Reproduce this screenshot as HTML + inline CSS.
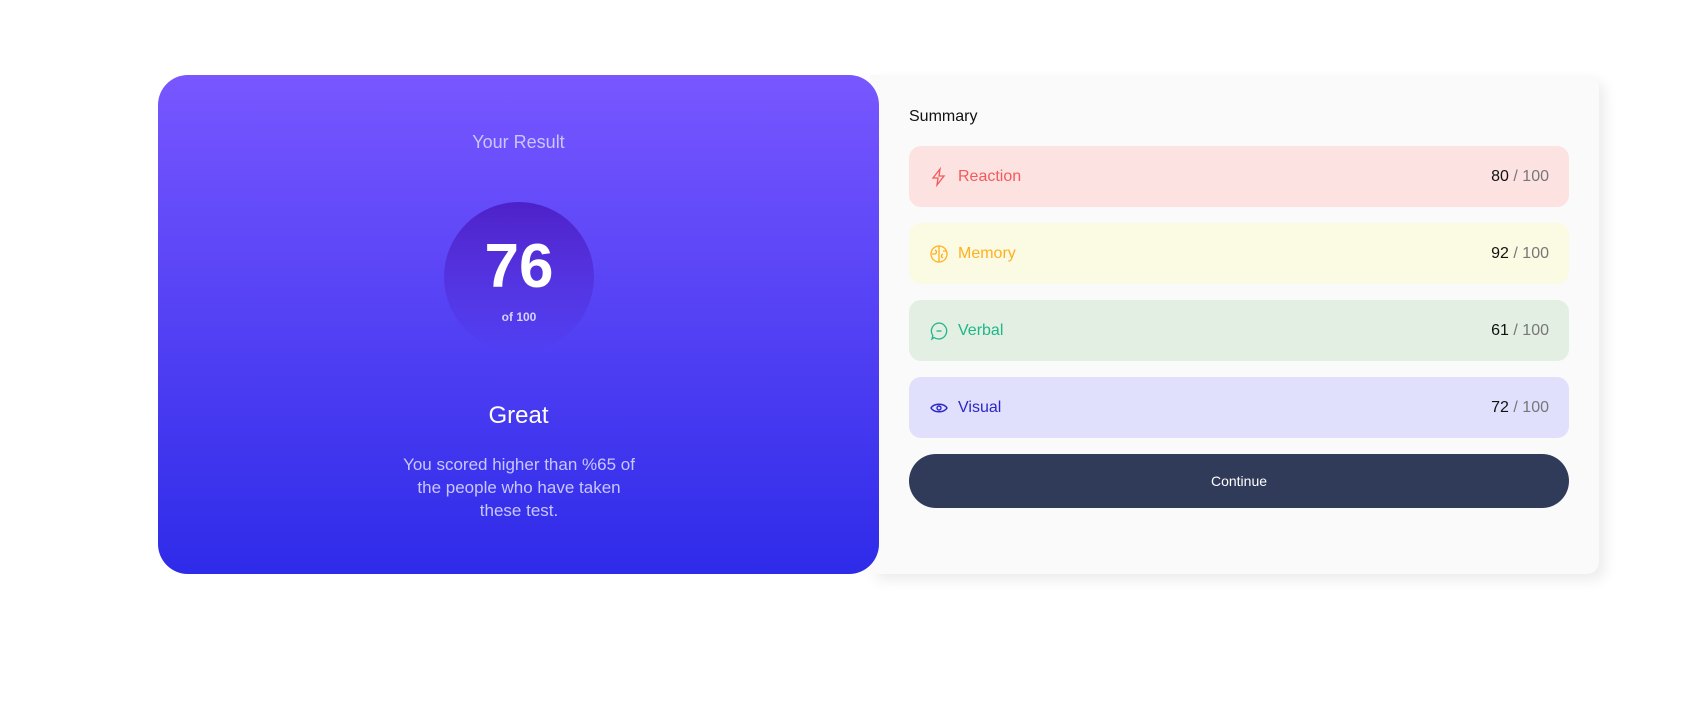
<!DOCTYPE html>
<html><head><style>
*{margin:0;padding:0;box-sizing:border-box}
body{width:1702px;height:706px;background:#fff;font-family:"Liberation Sans",sans-serif;position:relative;overflow:hidden}
.left{position:absolute;left:158px;top:75px;width:721px;height:499px;border-radius:30px;background:linear-gradient(180deg,#7857ff 0%,#2e2be9 100%);color:#fff;text-align:center;z-index:2}
.right{position:absolute;left:870px;top:75px;width:729px;height:499px;border-radius:0 12px 12px 0;background:#fafafa;box-shadow:6px 6px 14px rgba(0,0,0,0.08)}
.yr{position:absolute;top:57px;left:0;width:100%;font-size:18px;color:#c8c7ff}
.circ{position:absolute;left:286px;top:127px;width:150px;height:150px;border-radius:50%;background:linear-gradient(180deg,#4d21c9 0%,rgba(37,33,201,0) 100%)}
.num{position:absolute;top:30px;width:100%;font-size:62px;font-weight:bold;line-height:70px}
.of{position:absolute;top:108px;width:100%;font-size:12px;font-weight:bold;color:#d5d3ff}
.great{position:absolute;top:327px;width:100%;font-size:24px;}
.p{position:absolute;top:378px;left:243px;width:236px;font-size:17px;line-height:23px;color:#c8c7ff}
.sum{position:absolute;left:39px;top:33px;font-size:16px;color:#111}
.row{position:absolute;left:39px;width:660px;height:61px;border-radius:12px;display:flex;align-items:center;padding:0 20px;font-size:16px}
.row svg{width:20px;height:20px;margin-right:9px}
.row .s{margin-left:auto;color:#111}
.row .s span{color:#777}
.btn{position:absolute;left:39px;top:379px;width:660px;height:54px;border-radius:27px;background:#303b5a;color:#fff;font-size:14px;text-align:center;line-height:54px}
</style></head><body>
<div class="left">
<div class="yr">Your Result</div>
<div class="circ"><div class="num">76</div><div class="of">of 100</div></div>
<div class="great">Great</div>
<div class="p">You scored higher than %65 of the people who have taken these test.</div>
</div>
<div class="right">
<div class="sum">Summary</div>
<div class="row" style="top:71px;background:#fde2e2;color:#f55a5a"><svg viewBox="0 0 20 20" fill="none" stroke="#f55a5a" stroke-width="1.3"><path d="M11 2L4 11h5l-1 7 7-9h-5z"/></svg>Reaction<div class="s">80 <span>/ 100</span></div></div>
<div class="row" style="top:148px;background:#fbfae3;color:#ffb01f"><svg viewBox="0 0 20 20" fill="none" stroke="#ffb01f" stroke-width="1.3"><circle cx="10" cy="10" r="8"/><path d="M10 2v16M6 6c2 1 2 3 0 4M14 10c-2 1-2 3 0 4M3 10h3M14 7h3"/></svg>Memory<div class="s">92 <span>/ 100</span></div></div>
<div class="row" style="top:225px;background:#e2efe2;color:#1db78a"><svg viewBox="0 0 20 20" fill="none" stroke="#1db78a" stroke-width="1.3"><path d="M10 2a8 8 0 1 1-5 14.5L3 18l.8-3.5A8 8 0 0 1 10 2z"/><path d="M7.5 10h5"/></svg>Verbal<div class="s">61 <span>/ 100</span></div></div>
<div class="row" style="top:302px;background:#e1e0fc;color:#2b26c8"><svg viewBox="0 0 20 20" fill="none" stroke="#2b26c8" stroke-width="1.4"><path d="M2 10c3-5 13-5 16 0-3 5-13 5-16 0z"/><circle cx="10" cy="10" r="2"/></svg>Visual<div class="s">72 <span>/ 100</span></div></div>
<div class="btn">Continue</div>
</div>
</body></html>
